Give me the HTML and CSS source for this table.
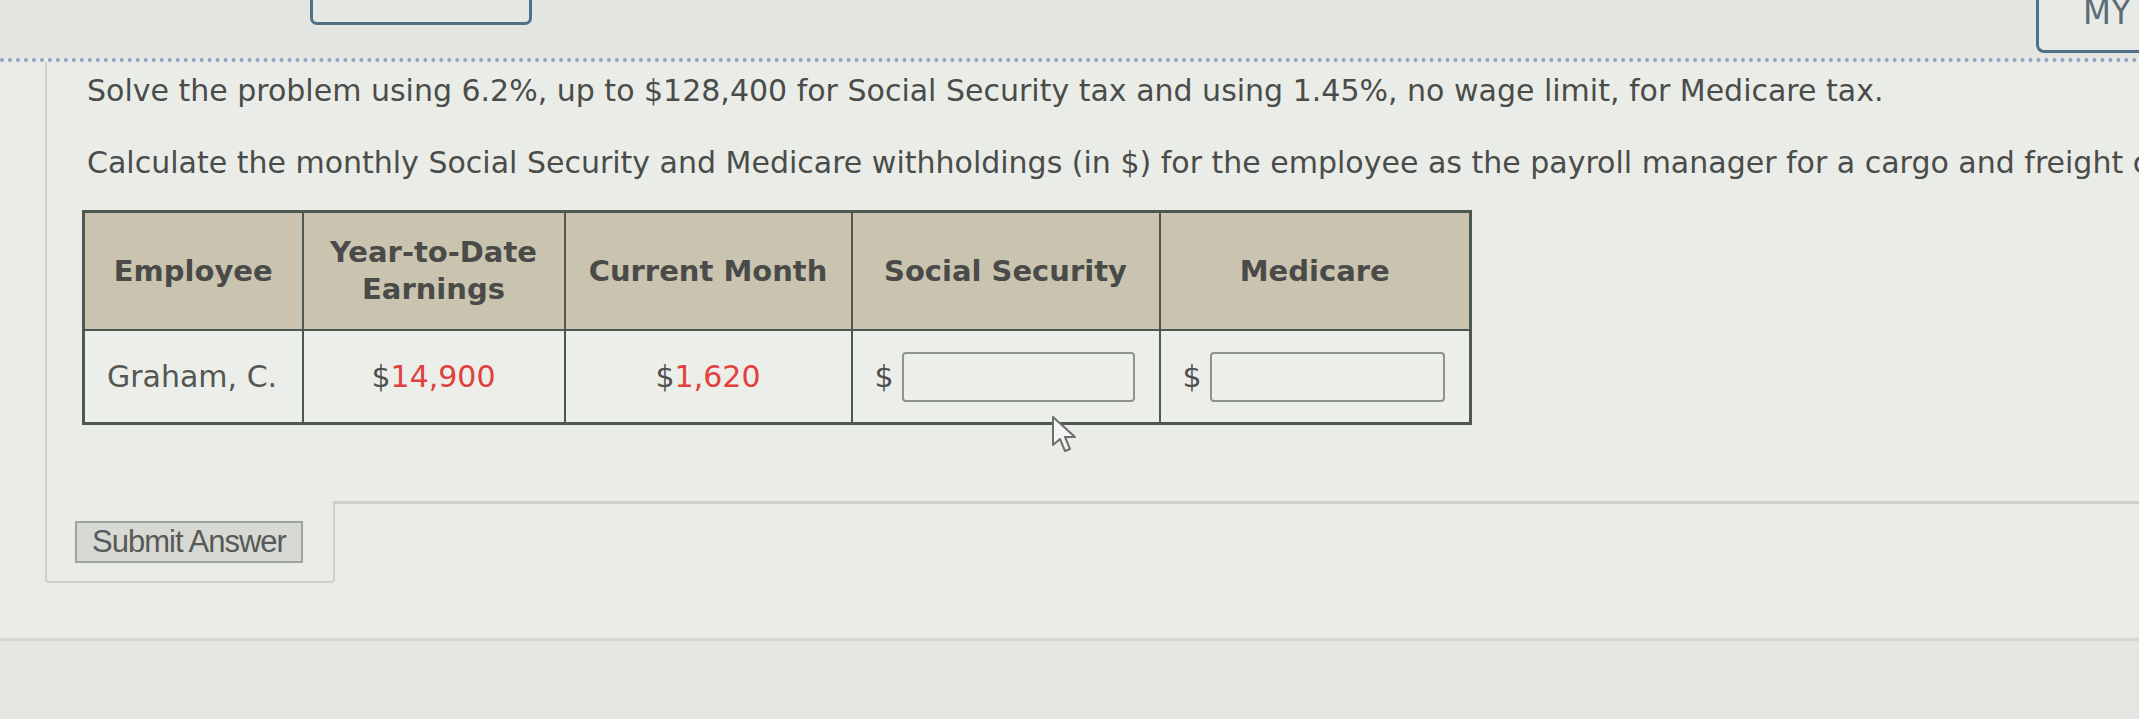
FILE: index.html
```html
<!DOCTYPE html>
<html>
<head>
<meta charset="utf-8">
<title>Payroll</title>
<link rel="stylesheet" href="styles.css">
</head>
<body>
<div class="topbar">
  <div class="tab-box"></div>
  <div class="cut-text">Round to the nearest cent.</div>
  <div class="my-box"><span class="my-text">MY</span></div>
</div>
<div class="main">
  <div class="panel">
    <p class="q q1">Solve the problem using 6.2%, up to $128,400 for Social Security tax and using 1.45%, no wage limit, for Medicare tax.</p>
    <p class="q q2">Calculate the monthly Social Security and Medicare withholdings (in $) for the employee as the payroll manager for a cargo and freight company.</p>
    <table class="grid">
      <colgroup>
        <col class="c1"><col class="c2"><col class="c3"><col class="c4"><col class="c5">
      </colgroup>
      <thead>
        <tr>
          <th>Employee</th>
          <th>Year-to-Date<br>Earnings</th>
          <th>Current Month</th>
          <th>Social Security</th>
          <th>Medicare</th>
        </tr>
      </thead>
      <tbody>
        <tr>
          <td class="name">Graham, C.</td>
          <td class="num"><span class="cur">$</span><span class="red">14,900</span></td>
          <td class="num"><span class="cur">$</span><span class="red">1,620</span></td>
          <td class="inp"><div class="field"><span class="dollar">$</span><span class="box"></span></div></td>
          <td class="inp"><div class="field"><span class="dollar">$</span><span class="box"></span></div></td>
        </tr>
      </tbody>
    </table>
  </div>
  <div class="actions">
    <div class="btn-area"><button class="submit" type="button">Submit Answer</button></div>
    <div class="filler"></div>
  </div>
  <div class="footer"></div>
</div>
<svg class="cursor" width="30" height="40" viewBox="0 0 30 40"><path d="M2 2 L2 30 L9 24 L14 36 L19 34 L14 22 L24 22 Z" fill="#f4f5f2" stroke="#6b706c" stroke-width="2" stroke-linejoin="round"/></svg>
</body>
</html>
```

FILE: styles.css
```css
html, body {
  margin: 0;
  padding: 0;
}
body {
  width: 2139px;
  height: 719px;
  overflow: hidden;
  background: #e2e4df;
  font-family: "DejaVu Sans", Verdana, sans-serif;
  color: #4a4c4a;
  position: relative;
}
.topbar {
  height: 58px;
  display: flex;
  align-items: flex-start;
  background: #e3e5e0;
  overflow: hidden;
}
.tab-box {
  margin-left: 310px;
  width: 216px;
  height: 22px;
  border: 3px solid #4f7088;
  border-top: none;
  border-radius: 0 0 7px 7px;
  background: #e6e8e3;
}
.cut-text {
  margin-left: 150px;
  margin-top: -26px;
  font-size: 28px;
  font-weight: bold;
  color: #3a3c3b;
  line-height: 34px;
}
.my-box {
  margin-left: auto;
  width: 100px;
  height: 50px;
  border: 3px solid #4f7088;
  border-top: none;
  border-right: none;
  border-radius: 0 0 0 8px;
  background: #e8eae5;
  overflow: hidden;
}
.my-text {
  display: block;
  margin-left: 44px;
  margin-top: -8px;
  font-size: 36px;
  line-height: 40px;
  color: #5d6d78;
  font-family: "DejaVu Sans Condensed", "DejaVu Sans", sans-serif;
}
.main {
  border-top: 4px dotted #8ea6c2;
  background: #e9ebe7;
}
.panel {
  margin-left: 45px;
  border-left: 2px solid #cfd2cd;
  padding: 12px 0 76px 0;
  background: #eaece8;
}
.q {
  margin: 0 0 0 40px;
  font-size: 30px;
  line-height: 34px;
  white-space: nowrap;
  overflow: hidden;
  color: #4a4c4a;
}
.q2 {
  margin-top: 38px;
}
.grid {
  margin: 30px 0 0 35px;
  border-collapse: collapse;
  border: 3px solid #4e5853;
  table-layout: fixed;
  width: 1387px;
}
.c1 { width: 219px; }
.c2 { width: 262px; }
.c3 { width: 287px; }
.c4 { width: 308px; }
.c5 { width: 311px; }
.grid th {
  height: 116px;
  background: #c9c3af;
  border: 2px solid #4e5853;
  font-size: 29px;
  line-height: 37px;
  font-weight: bold;
  color: #4a4b48;
  text-align: center;
  padding: 0 8px;
}
.grid td {
  height: 91px;
  background: #eceeea;
  border: 2px solid #4e5853;
  font-size: 30px;
  color: #555755;
  padding: 0;
}
.grid td.name {
  padding-left: 22px;
  text-align: left;
}
.grid td.num {
  text-align: center;
}
.cur {
  color: #4e504e;
}
.red {
  color: #e2403c;
}
.field {
  display: flex;
  align-items: center;
  gap: 8px;
  padding: 0 24px 0 22px;
}
.dollar {
  font-size: 30px;
  color: #4e504e;
}
.box {
  flex: 1;
  height: 46px;
  border: 2px solid #8e938f;
  border-radius: 4px;
  background: #edefeb;
}
.actions {
  display: flex;
  align-items: stretch;
}
.btn-area {
  margin-left: 45px;
  width: 258px;
  padding: 20px 0 18px 28px;
  border: 2px solid #cdd0cb;
  border-top: none;
  border-radius: 0 0 4px 4px;
  background: #eaece8;
}
.submit {
  display: block;
  width: 228px;
  height: 42px;
  margin: 0;
  padding: 0;
  border: 2px solid #9ea39f;
  background: #d6d9d4;
  font-family: "Liberation Sans", Arial, sans-serif;
  font-size: 31px;
  line-height: 36px;
  letter-spacing: -1px;
  color: #585a58;
}
.filler {
  flex: 1;
  border-top: 3px solid #cdd0cb;
  background: #e9ebe7;
}
.footer {
  margin-top: 55px;
  border-top: 3px solid #d3d6d1;
  height: 120px;
  background: #e4e6e1;
}
.cursor {
  position: absolute;
  left: 1051px;
  top: 415px;
}
```
